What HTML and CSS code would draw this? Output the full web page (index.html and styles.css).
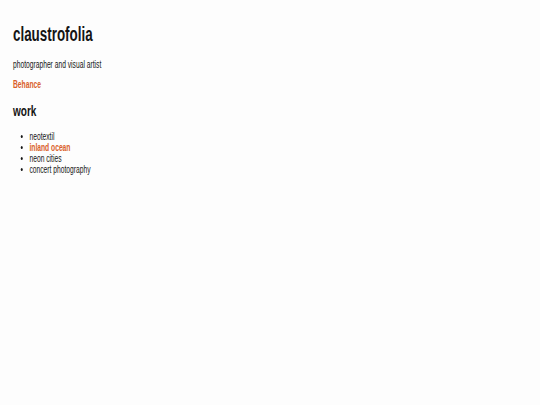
FILE: index.html
```html
<!DOCTYPE html>
<html>
<head>
<meta charset="utf-8">
<link rel="stylesheet" href="styles.css">
</head>
<body>
<div class="page">
  <h1 class="title">claustrofolia</h1>
  <p class="tagline">photographer and visual artist</p>
  <p class="links"><a class="link" href="#">Behance</a></p>
  <h2 class="section">work</h2>
  <ul class="works">
    <li>neotextil</li>
    <li><a class="link" href="#">inland ocean</a></li>
    <li>neon cities</li>
    <li>concert photography</li>
  </ul>
</div>
</body>
</html>
```
FILE: styles.css
```css
html, body {
  margin: 0;
  padding: 0;
  background: #fdfdfd;
}
.page {
  padding: 0 0 0 19.4px;
  font-family: "Liberation Sans", Arial, sans-serif;
  color: #151515;
  transform: scaleX(0.67);
  transform-origin: 0 0;
}
.title {
  font-size: 20px;
  font-weight: bold;
  margin: 0;
  padding-top: 22px;
  line-height: 24px;
}
.tagline {
  font-size: 10px;
  margin: 13px 0 0;
  line-height: 12px;
}
.links {
  font-size: 10px;
  margin: 8px 0 0;
  line-height: 12px;
}
.link {
  color: #d9602a;
  font-weight: bold;
  text-decoration: none;
}
.section {
  font-size: 15px;
  font-weight: bold;
  margin: 10.5px 0 0;
  line-height: 18px;
}
.works {
  font-size: 10px;
  line-height: 11px;
  margin: 11.5px 0 0;
  padding-left: 24.6px;
}
```
